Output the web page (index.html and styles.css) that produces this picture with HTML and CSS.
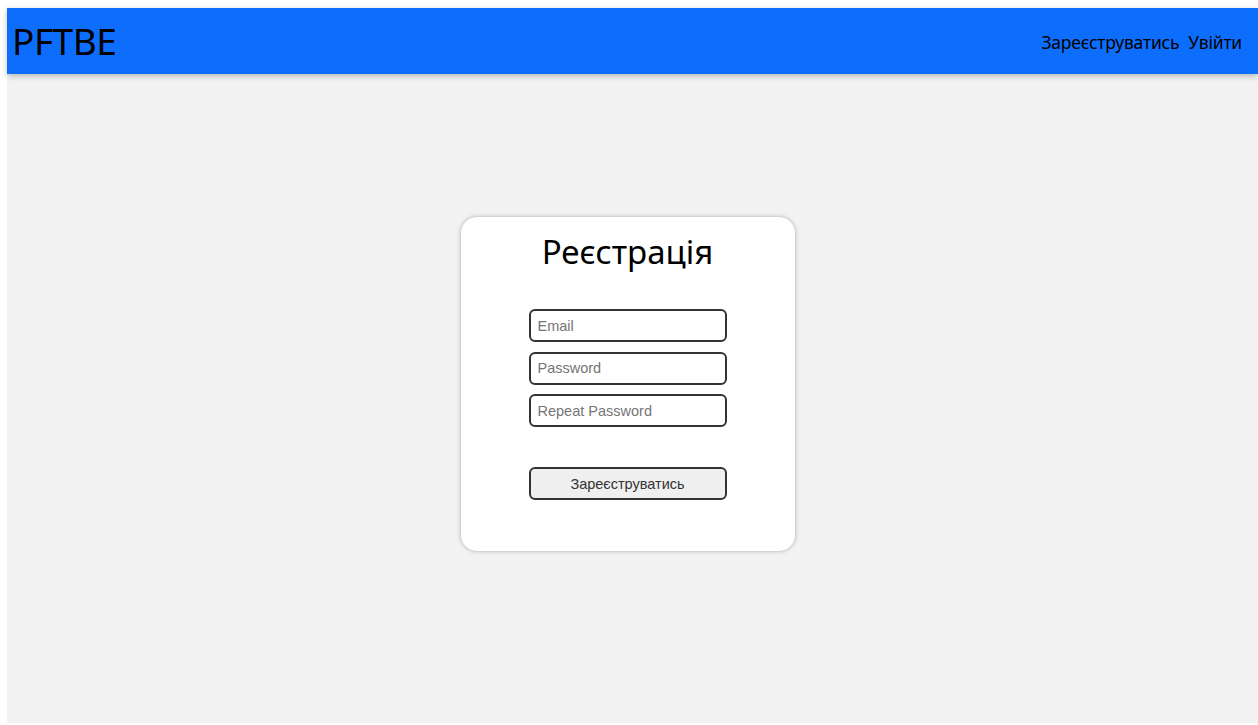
FILE: index.html
```html
<!DOCTYPE html>
<html lang="uk">
<head>
<meta charset="utf-8">
<title>PFTBE</title>
<link rel="stylesheet" href="styles.css">
</head>
<body>
<div class="app">
  <header class="topbar">
    <div class="brand">PFTBE</div>
    <nav class="nav">
      <a href="#" class="nav-link">Зареєструватись</a>
      <a href="#" class="nav-link">Увійти</a>
    </nav>
  </header>
  <main class="stage">
    <form class="card">
      <h1 class="card-title">Реєстрація</h1>
      <div class="fields">
        <input class="field" type="email" placeholder="Email">
        <input class="field" type="password" placeholder="Password">
        <input class="field" type="password" placeholder="Repeat Password">
      </div>
      <button class="submit" type="button">Зареєструватись</button>
    </form>
  </main>
</div>
</body>
</html>
```
FILE: styles.css
```css
html, body {
  margin: 0;
  padding: 0;
  background: #ffffff;
}

body {
  padding: 8px 0 2px 7px;
  font-family: "Noto Sans", "Open Sans", sans-serif;
  overflow: hidden;
}

.app {
  display: flex;
  flex-direction: column;
  height: 715px;
  background: #f2f2f2;
}

.topbar {
  position: relative;
  z-index: 1;
  flex: 0 0 66px;
  display: flex;
  align-items: center;
  justify-content: space-between;
  padding: 0 16px 0 5px;
  background: #0d6efd;
  box-shadow: 0 2px 6px rgba(0, 0, 0, 0.25);
}

.brand {
  font-size: 37px;
  color: #000;
  letter-spacing: -0.5px;
  margin-top: -2px;
}

.nav {
  display: flex;
  gap: 9px;
  margin-top: 2px;
}

.nav-link {
  color: #000;
  text-decoration: none;
  font-size: 17.5px;
  letter-spacing: -0.2px;
}

.stage {
  flex: 1;
  display: flex;
  justify-content: center;
  align-items: flex-start;
  padding: 143px 10px 0 0;
}

.card {
  width: 334px;
  height: 334px;
  box-sizing: border-box;
  background: #fff;
  border-radius: 16px;
  box-shadow: 0 0 4px rgba(0, 0, 0, 0.3);
  display: flex;
  flex-direction: column;
  align-items: center;
  margin: 0;
}

.card-title {
  margin: 13px 0 0;
  font-size: 33px;
  font-weight: 400;
  line-height: 44px;
  color: #000;
}

.fields {
  display: flex;
  flex-direction: column;
  gap: 9.5px;
  margin-top: 35px;
}

.field,
.submit {
  width: 198px;
  height: 33px;
  box-sizing: border-box;
  border: 2px solid #333;
  border-radius: 6px;
  font-family: "Liberation Sans", Arial, sans-serif;
  font-size: 14.5px;
}

.field {
  padding: 0 7px;
  background: #fff;
  color: #000;
  outline: none;
}

.field::placeholder {
  color: #757575;
}

.submit {
  margin-top: 40px;
  background: #efefef;
  color: #333;
  cursor: pointer;
}
```
